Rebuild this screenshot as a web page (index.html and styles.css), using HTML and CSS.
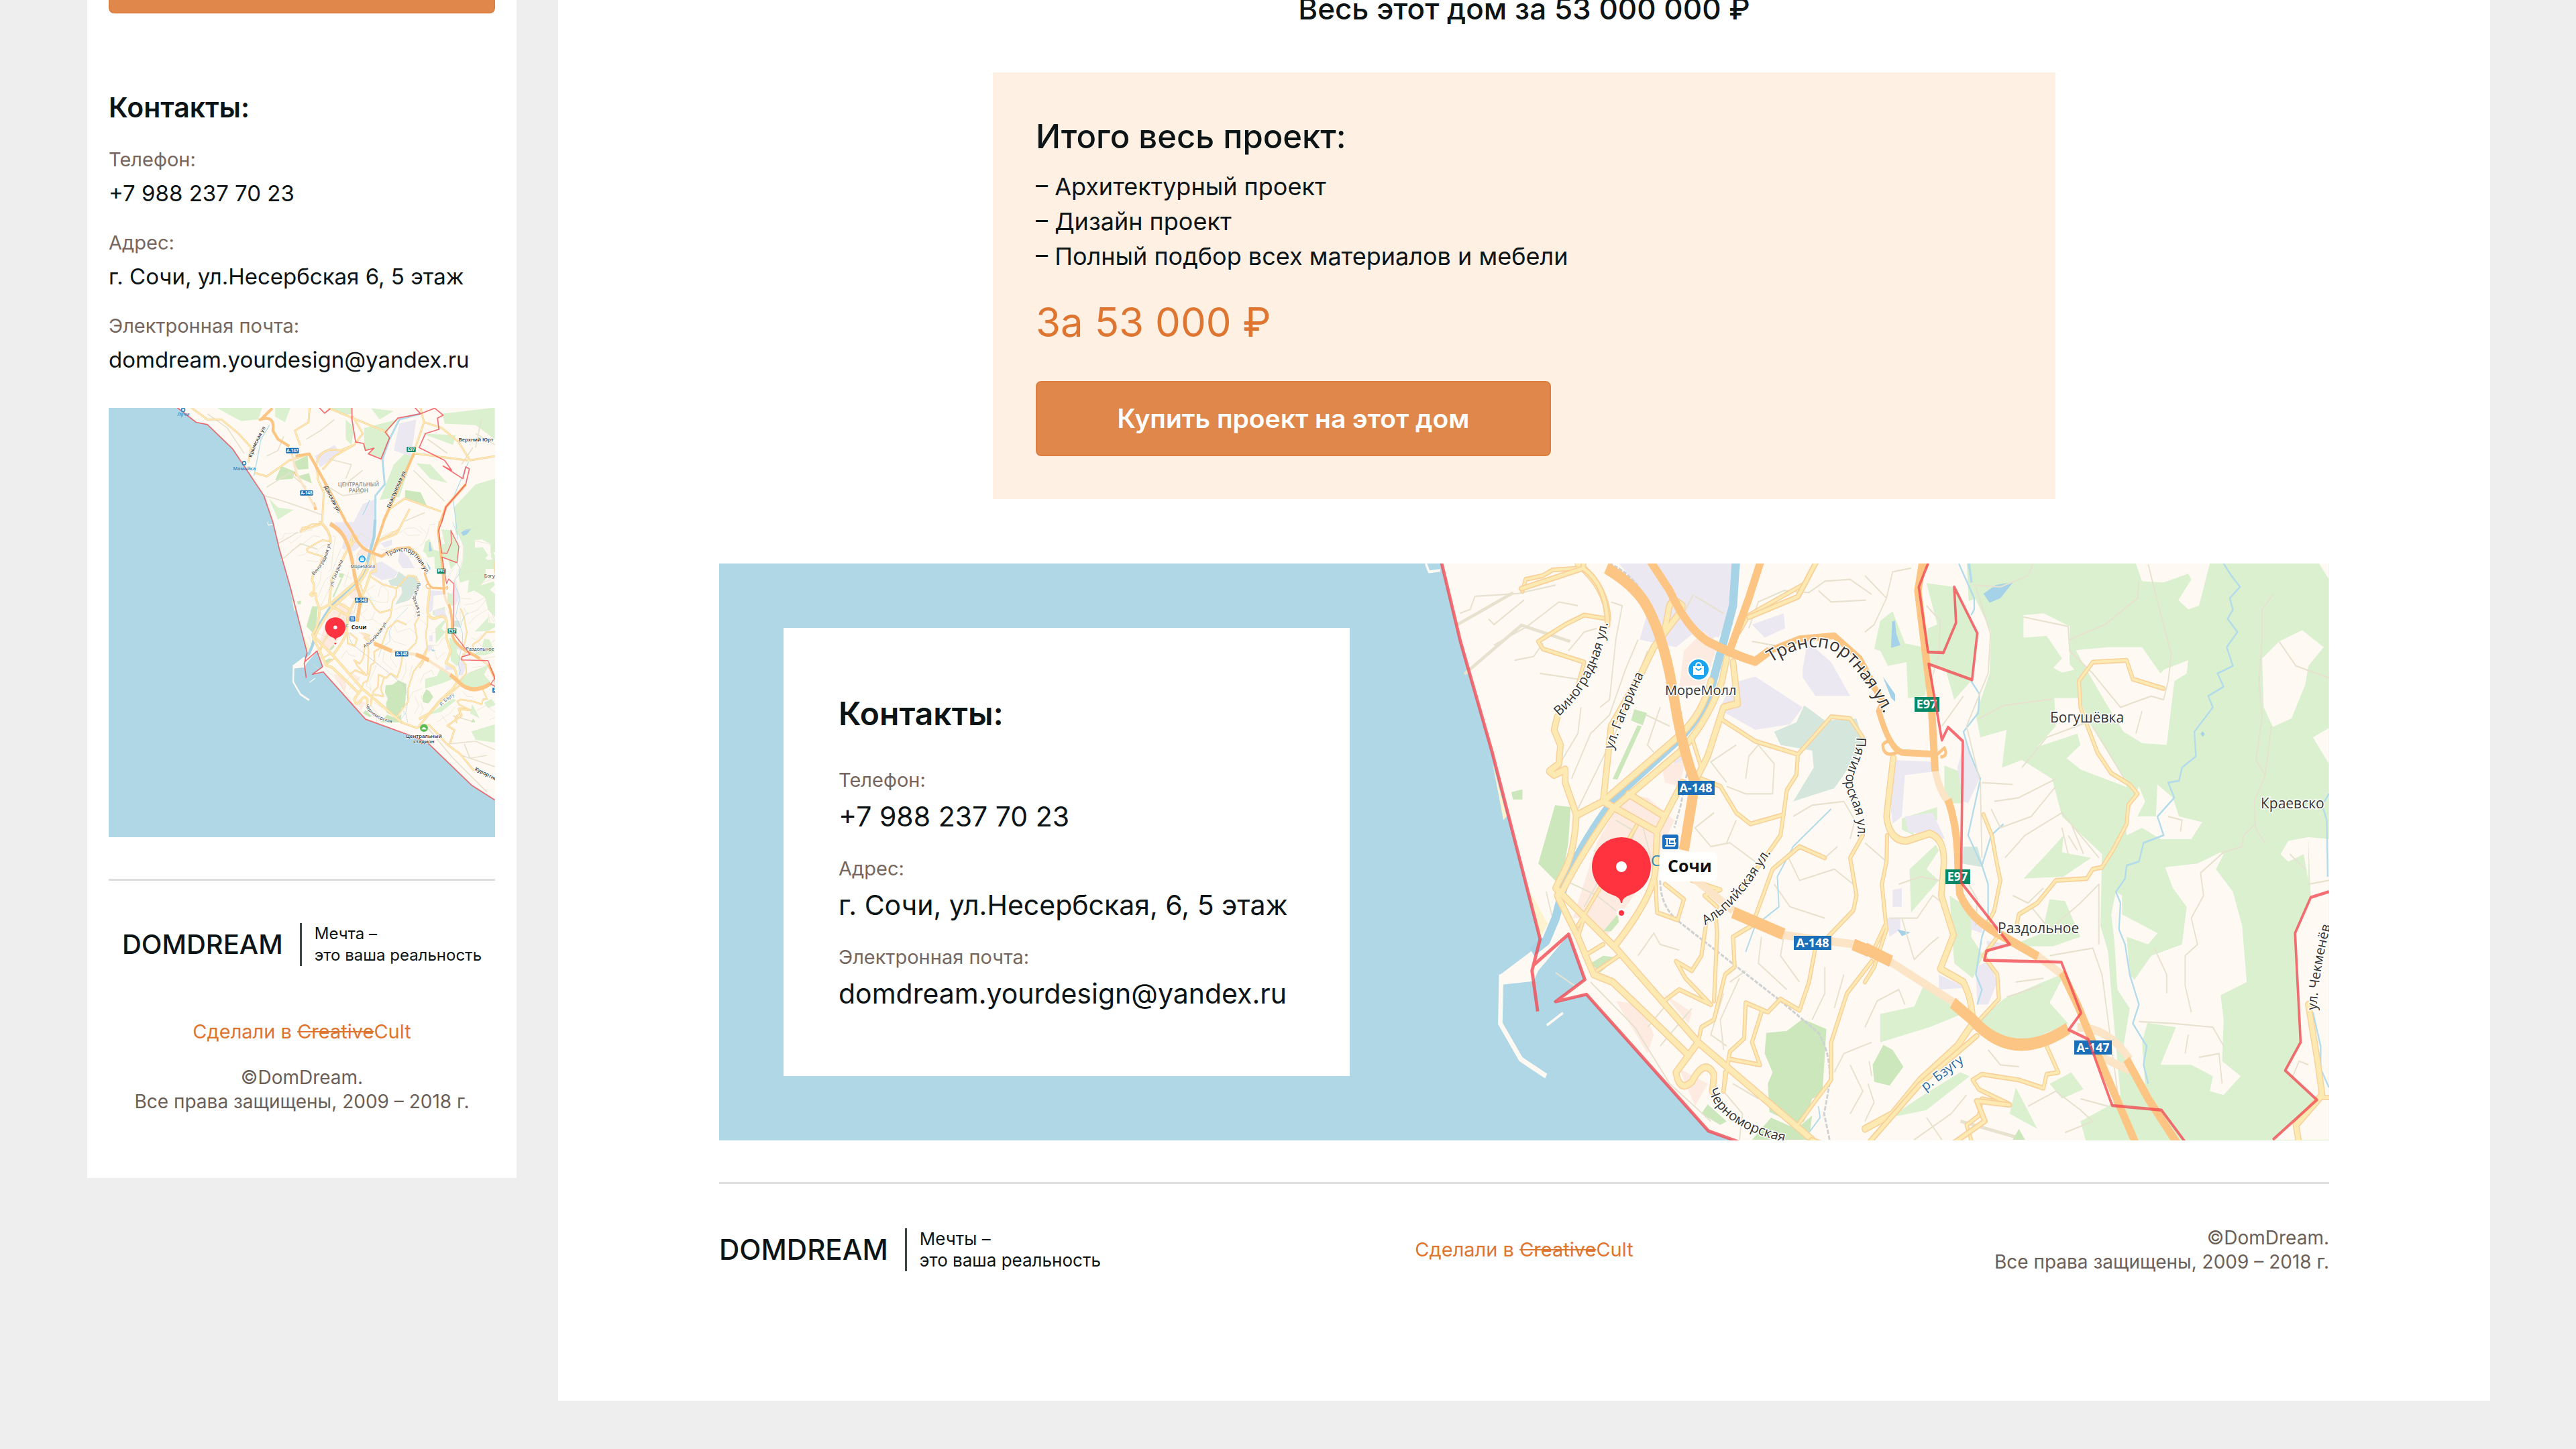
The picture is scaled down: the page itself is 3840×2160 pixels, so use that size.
FILE: index.html
```html
<!DOCTYPE html>
<html lang="ru">
<head>
<meta charset="utf-8">
<meta name="viewport" content="width=device-width, initial-scale=1">
<title>DomDream</title>
<link rel="stylesheet" href="styles.css">
</head>
<body>
<div class="board">

  <section class="phone">
    <button class="btn btn-tail" type="button" aria-label="Купить"></button>
    <h2 class="phone-title">Контакты:</h2>
    <dl class="contacts contacts-small">
      <div class="contact"><dt>Телефон:</dt><dd><a href="tel:+79882377023">+7 988 237 70 23</a></dd></div>
      <div class="contact"><dt>Адрес:</dt><dd>г. Сочи, ул.Несербская 6, 5 этаж</dd></div>
      <div class="contact"><dt>Электронная почта:</dt><dd><a href="mailto:domdream.yourdesign@yandex.ru">domdream.yourdesign@yandex.ru</a></dd></div>
    </dl>
    <svg class="phone-map" viewBox="1444 349 1659 1843" preserveAspectRatio="xMidYMid slice" role="img">
      <use href="#sochi"/>
      <g transform="translate(1322.6 326) scale(1.212)">
        <defs>
          <path id="n-don" d="M864,298 Q893,360 928,416"/>
          <path id="n-pla" d="M1098,375 Q1118,310 1170,215"/>
          <path id="n-kry" d="M608,195 Q615,160 656,90"/>
          <path id="n-kur" d="M1396,1302 L1500,1354"/>
        </defs>
        <g class="n-district"><text x="985" y="297">ЦЕНТРАЛЬНЫЙ</text><text x="985" y="318">РАЙОН</text></g>
        <g class="n-place">
          <text x="1340" y="137">Верхний Юрт</text>
          <text class="n-mid" x="1217" y="1189">Центральный</text>
          <text class="n-mid" x="1217" y="1207">стадион</text>
        </g>
        <g class="n-place">
          <text><textPath href="#n-don">Донская ул.</textPath></text>
          <text><textPath href="#n-pla">Пластунская ул.</textPath></text>
          <text><textPath href="#n-kry">Крымская ул.</textPath></text>
          <text><textPath href="#n-kur">Курортный</textPath></text>
        </g>
        <g class="n-water"><text x="343" y="47">Лучи</text><text x="541" y="239">Мамайка</text></g>
        <circle class="stop" cx="364" cy="26" r="6"/><circle class="stop" cx="580" cy="215" r="6"/>
        <g class="badge badge-blue"><rect x="728" y="161" width="46" height="19" rx="3"/><text x="751" y="176">A-147</text></g>
        <g class="badge badge-blue"><rect x="778" y="311" width="46" height="19" rx="3"/><text x="801" y="326">A-148</text></g>
        <g class="badge badge-green"><rect x="1156" y="157" width="32" height="19" rx="3"/><text x="1172" y="172">E97</text></g>
        <circle cx="1217" cy="1153" r="14" fill="#5dbb55"/><path d="M1208,1158 Q1217,1142 1226,1158z" fill="#fff"/>
      </g>
    </svg>
    <footer class="phone-footer">
      <a class="logo" href="#"><span class="logo-name">DOMDREAM</span><span class="logo-tag">Мечта –<br>это ваша реальность</span></a>
      <a class="credit" href="#">Сделали в <s>Creative</s>Cult</a>
      <p class="copyright">©DomDream.<br>Все права защищены, 2009 – 2018 г.</p>
    </footer>
  </section>

  <main class="desktop">
    <h1 class="house-price">Весь этот дом за 53 000 000 ₽</h1>

    <section class="offer">
      <h2 class="offer-title">Итого весь проект:</h2>
      <ul class="offer-list">
        <li>– Архитектурный проект</li>
        <li>– Дизайн проект</li>
        <li>– Полный подбор всех материалов и мебели</li>
      </ul>
      <p class="offer-price">За 53 000 ₽</p>
      <button class="btn" type="button">Купить проект на этот дом</button>
    </section>

    <section class="location">
      <svg class="location-map" viewBox="1072 840 2400 860" preserveAspectRatio="xMidYMid slice" role="img">
        <defs>
          <!-- west, east and north sheets of the road network -->
          <g id="main-w">
            <path d="M640,18 Q730,80 735,165 M635,685 Q630,780 600,830 L570,880 L760,1040 L1020,1290 L1380,1549"/>
            <path d="M1110,270 L1095,330 Q1050,440 960,520 L750,670 Q650,790 590,890"/>
            <path d="M1060,330 Q1030,430 940,490 L720,650 L640,685"/>
            <path d="M970,140 L880,240 L840,310 L745,450 L720,650"/>
            <path d="M970,130 Q930,100 925,150 L915,190 M1130,280 L1145,390 L1100,400 L1050,530 L1020,580"/>
            <path d="M575,900 L640,1010 L690,1110 L750,1130 L850,1210 L990,1325"/>
            <path d="M720,650 L890,730 M800,630 L915,690 M970,600 L890,730 L885,830 Q880,900 760,1030"/>
            <path d="M1020,1290 L950,1370 Q960,1425 1000,1395 Q1040,1330 1070,1375 L1065,1420"/>
            <path d="M575,425 L565,460 L585,500 L580,550 L550,570 L565,580 L600,565 L600,600 L635,685"/>
          </g>
          <g id="minor-w">
            <path d="M650,30 L560,35 L530,50 L475,60 L465,92 M735,165 L660,155 L600,180 L515,225 L530,245 L660,280 L640,340 M640,980 L825,715 M640,1010 L660,960 M660,1060 L720,1030 M700,1100 L770,1060"/>
            <path d="M1090,430 L1200,490 L1335,525 L1440,425 L1500,430 L1540,480 M1335,525 L1330,580 L1300,620 L1280,740 L1230,800 L1150,890 M1030,590 L1090,610 L1140,680 L1185,710 L1290,685 M1000,480 L1030,560"/>
            <path d="M915,870 L975,910 L955,965 L890,945 L885,860 M1045,975 L1030,1060 L1000,1100 L950,1075 L980,1120 L1060,1190 L960,1150 L905,1185 M1075,950 L1080,1000 L1070,1180 M1000,860 L1090,885 L1040,900 L1080,930"/>
            <path d="M1420,800 L1340,770 L1255,830 L1190,980 L1130,1010 L1135,1090 L1105,1110 L1070,1230 L1030,1250 L1020,1290 M1390,1040 L1370,1130 L1340,1205 L1280,1175 L1240,1210 L1170,1185 L1165,1280 L1120,1315 L1100,1420 M1220,1210 L1190,1290 L1215,1350 L1120,1335"/>
            <path d="M1540,740 L1500,800 L1520,900 L1510,940 L1430,1010 M1568,1075 L1490,1160 L1440,1290 L1440,1390 L1395,1440 L1330,1515"/>
            <path d="M1390,18 L1360,70 L1180,155 L1150,200 M1100,1420 L1105,1370"/>
          </g>
          <g id="main-e">
            <path d="M92,535 L70,690 Q80,755 135,755 L210,735 Q265,750 255,830 L248,900 L288,1005 L245,1095 L320,1130 Q350,1180 350,1240 L300,1300 L180,1390 L90,1480 L0,1520"/>
            <path d="M1440,1190 L1470,1340 L1485,1430 L1400,1510 L1410,1560"/>
          </g>
          <g id="minor-e">
            <path d="M72,740 L70,810 L55,870 L70,990 L30,1090 L0,1130 M65,980 L20,1060"/>
            <path d="M385,685 L412,740 L425,800 L440,860 L420,940 L395,980 L430,1010 L385,1060 L430,1110 L435,1175 L350,1250"/>
            <path d="M490,990 L500,950 L560,920 L620,860 L720,855 L740,830 L770,825 L805,780 L850,710 L855,660 L885,630 L860,605 L800,575 L755,520 L700,400 L695,330 L740,280 L850,275 L870,325 L970,350"/>
            <path d="M590,1300 L628,1370 L590,1375 L580,1412 L500,1390 L380,1375 L350,1390 L370,1415 L470,1455 L380,1440 L370,1485 L330,1510 L345,1549 M1480,1437 L1507,1437"/>
          </g>
          <g id="main-n">
            <path d="M395,20 L450,60 L500,60 L560,110 L605,160 L595,210 M620,250 L660,262 L740,205 L812,182 M812,182 Q845,240 840,270 L862,320 L856,430 L780,455 M856,430 Q885,450 886,500"/>
            <path d="M835,220 Q850,155 920,170 L970,150 L1000,110 L965,50 M880,20 L1000,70 L1085,105 M860,235 L900,190 L970,150 M1205,20 L1217,70 L1180,180 M1217,70 L1280,90 L1340,140 L1380,205 L1470,190 M1180,180 L1370,205 M1060,490 L1120,465 L1165,380 M1090,380 L1150,340 L1275,385 M760,100 L808,70 L812,20 M760,100 L778,150"/>
            <path d="M1137,1133 L1190,1152 L1235,1142 L1300,1212 L1345,1245 L1392,1302 M1200,1145 L1270,1065 L1340,1005 M1310,1205 L1325,1160 L1300,1145 L1350,1110 L1340,1085 L1380,1090"/>
          </g>
        </defs>

        <g id="sochi">
          <rect x="1000" y="300" width="2500" height="1950" fill="#b0d7e5"/>

          <g transform="translate(1322.6 326) scale(1.212)">
            <path fill="#fefaf3" d="M320,0 L343,18 L410,70 L450,78 L540,165 L590,240 L650,330 L682,424 L705,520 L744,656 L803,886 L795,918 L838,880 L858,936 L822,963 L860,954 L1010,1122 L1165,1178 L1230,1205 L1385,1355 L1468,1408 L1800,1600 L1800,0z"/>
            <g fill="#daf0cf">
              <path d="M480,16 L645,16 L630,60 L570,66 L520,40z M690,16 L745,16 L725,70 L690,50z M868,16 L960,16 L962,40 L930,45z M1125,60 L1085,105 L1100,125 L1065,200 L1020,180 L1040,165 L1005,170 L1005,90z M1150,180 L1180,185 L1130,335 L1060,345 L1110,220z"/>
              <path d="M1283,40 L1468,18 L1468,130 L1400,80 L1290,75z M1190,215 L1240,220 L1300,285 L1240,270z M1330,470 L1325,370 L1400,290 L1468,270 L1500,424z M668,340 L700,372 L755,380 L700,415z M1210,110 L1330,115 L1320,150z M940,60 L970,90 L960,150 L940,130z M1030,20 L1110,30 L1060,60z M1385,1165 L1468,1140 L1468,1205 L1400,1195z"/>
            </g>
            <path fill="#cbe7bb" d="M755,210 L805,188 L808,235 L770,238z M690,275 L712,225 L760,245 L752,270z M765,262 L810,250 L820,287z M1150,310 L1205,318 L1230,372 L1150,340z"/>
            <path fill="#ebe8f2" d="M1130,75 L1190,60 L1180,130 L1170,190 L1110,170z M1050,340 L1040,500 L1010,520 L960,440 L1000,360z M830,190 L900,150 L920,180 L850,230z"/>
            <g class="water"><path d="M1210,38 L1130,60 L1095,130 L1070,200 L1078,290 L1045,330 L1045,430" stroke-width="7"/><path d="M670,80 L640,130 L615,260 M1375,210 L1320,340 L1335,460 M1000,400 L1025,345" stroke-width="3"/></g>
            <g class="lane"><path d="M450,40 L520,90 L580,180 M660,300 L740,250 L800,300 M650,330 Q730,350 860,400 M700,500 L770,460 M710,560 L780,500 L840,520 M880,300 L930,330 L1000,320 M880,200 L960,220 L940,270 M1000,240 L950,280 M1230,130 L1300,180 M1180,240 L1290,350 M1150,420 L1220,390 M1400,110 L1468,150 M1420,60 L1400,160 M1390,160 L1350,220 M720,120 L700,170 L660,190 M900,60 L850,100 L800,130"/><path d="M1220,1140 L1320,1260 L1440,1380 M1300,1210 L1400,1200 L1468,1230 M1350,1250 L1468,1290 M1320,1110 L1390,1130 M1360,1210 L1380,1260 L1440,1250"/></g>
          </g>

          <!-- built-up, park and forest areas -->
          <g transform="translate(2050 830) scale(.472 .561)">
            <path fill="#ebe8f2" d="M770,18 L1150,18 L1120,150 L1085,215 L1010,200 L950,240 L835,220 L870,120z M1130,335 L1200,318 L1350,400 L1310,445 L1200,460 L1085,405z M1190,180 L1290,150 L1295,190 L1230,215z M1350,300 L1365,225 L1440,280 L1500,370 L1390,370 L1350,320z M940,545 L975,520 L970,580z"/>
            <path fill="#fdebe2" d="M625,960 L700,760 L790,630 L860,640 L945,700 L870,830 L730,1010 L650,960z M975,250 L1040,195 L1080,240 L1040,340 L960,345z M760,1180 L840,1190 L880,1270 L860,1320z M910,1160 L1000,1210 L990,1240z M960,1360 L1050,1400 L1010,1460z M905,560 L980,540 L960,610 L915,600z"/>
            <path fill="#d5e6dd" d="M1260,465 L1330,440 L1355,395 L1420,435 L1520,430 L1545,500 L1450,615 L1320,650 L1385,560 L1380,515 L1280,500z"/>
            <path fill="#cbe7bb" d="M568,660 L617,665 L610,760 L595,830 L570,862 L515,815z M818,405 L858,415 L845,448 L808,435z M828,448 L842,450 L765,592 L750,590z M1235,1265 L1300,1260 L1350,1228 L1425,1255 L1412,1430 L1380,1440 L1355,1500 L1330,1510 L1245,1475 L1240,1400 L1255,1370 L1230,1320z M1190,1549 L1250,1490 L1330,1520 L1380,1485 L1370,1549z M720,995 L765,950 L770,970 L745,995z M680,1080 L720,1060 L765,1065 L710,1105z M1030,1480 L1050,1455 L1110,1500 L1090,1510z M430,625 L465,618 L465,645 L435,645z"/>
            <path fill="#fdf3cf" d="M490,890 L545,975 L522,1010z M370,545 L415,690 L405,700z"/>
            <g fill="#fefaf3"><path d="M522,1030 L395,1110 L400,1137 L500,1128 L515,1100 L610,1005z"/></g>
            <g class="pier"><path d="M398,1110 L395,1240 L460,1335 L540,1380"/><path class="pier-thin" d="M542,1245 L593,1212 M160,18 L170,40 L205,36"/></g>
          </g>
          <g transform="translate(2780 830) scale(.459 .561)">
            <path fill="#daf0cf" d="M335,70 L420,60 L470,18 L1507,18 L1507,1560 L720,1560 L700,1500 L790,1460 L830,1430 L800,1160 L790,1050 L765,980 L770,790 L640,690 L608,590 L510,540 L445,560 L460,460 L375,480 L360,420 L405,310 L410,200z"/>
            <path fill="#daf0cf" d="M200,70 L290,80 L365,203 L348,327 L290,380 L262,300 L210,285 L195,370 L140,375 L135,280 L75,290 L50,250 L30,245 L50,170 L90,145 L130,230 L190,240 L205,190 L235,180z M258,555 L322,575 L318,655 L258,655z M120,695 L235,665 L235,700 L150,700 L160,740 L120,725z M145,830 L230,765 L240,780 L200,830 L240,860 L150,945z M275,900 L350,940 L345,1010 L385,1060 L350,1120 L290,1080z M375,1230 L450,1175 L650,1105 L600,1185 L660,1240 L520,1290 L400,1270z M50,1215 L160,1195 L190,1140 L270,1170 L330,1210 L210,1250 L50,1290z M515,855 L590,790 L645,740 L640,785 L735,800 L645,850z M470,1035 L575,1000 L600,910 L650,915 L700,1010 L610,1035z M820,1160 L860,1180 L880,1250 L840,1330 L815,1240z M600,1400 L670,1370 L710,1415 L640,1440z M80,1490 L190,1430 L310,1370 L340,1380 L200,1470z M490,1410 L560,1520 L470,1480z"/>
            <path fill="#cbe7bb" d="M25,1350 L60,1297 L90,1310 L125,1355 L80,1405 L30,1395z M480,1549 L500,1520 L520,1549z"/>
            <path fill="#ebe8f2" d="M100,540 L225,545 L230,570 L130,580 L120,690 L90,710 L80,640z M130,690 L220,680 L260,750 L140,730z M300,560 L325,490 L372,590 L335,655 L320,650z M90,885 L120,880 L120,930 L90,930z M70,960 L115,960 L115,990 L80,1010z M345,945 L385,960 L380,1000 L345,990z M360,1090 L400,1075 L430,1130 L400,1190 L365,1190z M240,1110 L330,1145 L240,1150z M395,1020 L470,1030 L400,1050z"/>
            <path fill="#d5e6dd" d="M320,770 L365,770 L385,825 L315,815z M1000,1225 L1040,1215 L1030,1245z"/>
            <g fill="#fefaf3">
              <path d="M880,18 L1120,18 L1085,130 L1050,140 L1018,115 L1060,60 L1050,45 L970,68 L900,65z M515,155 L580,150 L665,185 L665,285 L680,300 L640,308 L612,295 L640,270 L590,210 L515,215z M685,248 L790,240 L900,240 L960,310 L970,300 L1050,275 L1045,310 L1005,330 L980,500 L900,495 L840,465 L780,385 L720,300z"/>
              <path d="M615,375 L695,375 L735,450 L850,600 L850,612 L700,565 L655,535 L700,500 L690,470 L560,505 L620,450z M1345,225 L1420,195 L1490,240 L1440,290 L1430,340 L1385,430 L1325,452 L1295,400 L1290,270z M950,605 L1000,640 L1020,690 L1095,705 L1060,750 L960,750 L900,720 L850,740 L845,700 L890,610 L910,650 L885,690 L945,690z"/>
              <path d="M975,825 L1080,815 L1155,785 L1165,790 L1140,830 L1195,890 L1225,980 L1240,1130 L1155,1165 L1165,1230 L1160,1340 L1220,1380 L1165,1430 L1120,1420 L1130,1380 L1060,1350 L960,1350 L1010,1250 L890,1235 L870,1130 L930,1060 L1030,1030 L1045,930 L1000,880z"/>
              <path d="M815,890 L835,900 L835,950 L950,1000 L920,1030 L850,1010 L860,1110 L925,1170 L920,1230 L900,1290 L910,1400 L870,1385 L840,1300 L860,1200 L820,1150 L810,1020 L800,950z M1350,790 L1375,755 L1440,745 L1440,860 L1425,790 L1375,810z M1507,750 L1507,1549 L1325,1549 L1468,1443 L1367,1365 L1415,1290 L1397,1000 L1448,905 L1440,745z M1455,480 L1507,455 L1507,550z M1475,18 L1507,18 L1507,60z"/>
            </g>
            <path fill="#a5d2e8" d="M385,98 L425,75 L482,67 L440,110 L405,122z M88,172 L98,170 L102,205 L115,235 L85,242z M58,318 L98,365 L98,385 L85,375z M105,990 L148,998 L120,1008z M1090,470 L1097,464 L1104,471 L1097,478z"/>
            <g class="water" stroke-width="5">
              <path d="M305,18 L355,110 L355,140 L345,155 M345,330 L372,365 L368,415 L320,465 L340,520 L375,590 L335,740 L380,820 L400,870 L400,960 L380,1010 L360,1110 L380,1150 L365,1190 M380,820 L410,740 L450,710 M1165,18 L1190,50 L1218,80 L1185,110 L1195,140 L1178,165 L1210,200 L1175,240 L1195,290 L1145,310 L1165,345 L1115,370 L1130,400 L1070,465 L1075,530 L1030,560 L1020,595 L985,600 L1005,640 L950,690 L970,740 L905,760 L890,810 L850,820 L845,855 L815,890 L830,920 L825,990 L845,1030 L860,1110 L890,1190 L870,1240 L915,1300 L905,1350 L920,1400 M1507,630 L1485,660 L1500,700 L1503,850 M1455,1210 L1480,1300 L1480,1360 L1507,1410"/>
            </g>
          </g>

          <!-- lanes, railway and river -->
          <g transform="translate(2050 830) scale(.472 .561)">
            <g class="lane">
              <path d="M268,150 L300,140 L315,105 L450,98 L570,75 M358,165 L375,180 L470,115 M375,235 L480,185 L580,120 L640,130 M440,275 L500,265 L530,230 M520,310 L640,325 M610,250 L660,200 L700,190 M745,120 L780,130 L760,220 L740,380 L710,400 M830,220 L790,300 L740,420 L680,470 L620,590 M860,250 L780,430 L640,670 M650,400 L640,470 L590,540"/>
              <path d="M855,420 L930,450 M900,400 L860,500 L880,520 M1005,100 L980,140 M1010,105 L1100,150 M1180,190 L1210,120 L1290,90 L1370,95 L1420,65 L1500,60 L1568,100 M1190,225 L1290,240 M1400,90 L1440,120 L1550,115 M1170,590 L1180,530 L1210,500 L1260,550 L1255,630 L1170,630 L1110,610 M1140,500 L1060,545 L1110,600 M1070,680 L1010,720 L1060,770 L1120,760 L1200,810 M1140,700 L1110,760"/>
              <path d="M1320,690 L1380,660 L1480,650 L1515,700 L1500,750 M1300,790 L1340,860 L1450,830 L1510,870 M1260,870 L1310,930 L1420,960 M1460,770 L1420,800 M540,890 L560,960 M600,860 L700,900 L760,940 M690,780 L790,830 M660,930 L760,780 M760,700 L820,730 L770,860 M840,700 L880,830 M830,1060 L880,1000 L900,1030 L960,1045 M790,1070 L850,1130 L900,1170 M680,1130 L820,1250 L930,1400 L1060,1500"/>
              <path d="M900,1300 L1000,1200 M860,1250 L920,1190 M1100,1160 L1060,1270 L1110,1300 M1150,1120 L1090,1230 L1100,1310 M1100,1420 L1160,1480 L1150,1549 M1130,1400 L1210,1440 M1170,1100 L1120,1130 M1220,1010 L1210,1080 L1300,1150 M1290,1010 L1280,1060 L1340,1130 M1420,1090 L1420,1160 L1380,1230 M1450,1370 L1480,1320 L1568,1290 M1500,1350 L1540,1420 L1500,1480 M1560,1340 L1568,1380 M570,1105 L630,1140 M1480,1110 L1450,1200"/>
            </g>
            <path class="rail" d="M740,18 Q850,60 875,170 L960,430 L995,530 L965,660 L945,720 M900,860 Q900,930 960,970 L1280,1180 L1400,1265 Q1440,1320 1435,1400 L1418,1480 L1435,1549"/>
            <path class="river" d="M1140,0 L1130,130 L1070,320 Q1040,420 950,490 L780,620 Q680,720 600,860 L570,960 L540,1020 L495,1050"/>
            <g class="water" stroke-width="4"><path d="M1440,670 L1320,770 L1270,850 L1275,930 L1200,980 L1170,1050 M1400,1460 L1405,1490 L1370,1530"/></g>
          </g>
          <g transform="translate(2780 830) scale(.459 .561)">
            <g class="lane">
              <path d="M0,50 L70,110 L30,180 L0,200 M70,110 L90,40 L150,30 M200,130 L245,170 L240,260 L215,330 M320,370 L250,450 M350,75 L440,80 L530,50 L545,20 M360,80 L408,205 L400,310 L330,450 L375,600 L380,800 M890,65 L885,110 L780,180 L665,220 M515,160 L660,185 L665,250 L740,310 L830,400 L930,370 L970,380 L985,330 L995,260 L960,150 L920,20 M370,430 L450,395 L610,378 M720,440 L590,480 L510,560 M740,450 L850,600 M880,470 L900,410"/>
              <path d="M380,600 L480,605 M420,650 L500,640 L620,590 M410,670 L440,720 L540,690 L620,610 M455,800 L520,740 L640,680 L760,800 M640,720 L660,790 M670,710 L710,790 M660,740 L690,780 M480,900 L530,920 L580,880 M540,930 L600,990 L700,920 L760,870 L760,1030 M1325,100 L1290,140 L1290,220 L1280,330 L1290,430 L1270,540 L1300,580 L1265,650 L1268,720 L1300,762 M1320,450 L1300,580 M1268,710 L1230,740 L1225,770 L1165,785 L1090,840 L1100,900 L1060,960 L1080,1030 L1040,1060 L1040,1140 L1060,1210 M1345,225 L1400,290 L1507,322 M985,690 L1030,700 L1025,730"/>
              <path d="M600,1060 L740,1040 L770,1110 L830,1480 M490,1130 L580,1120 M460,1170 L570,1140 M890,1235 L1000,1240 L1130,1250 L1165,1300 M1050,1270 L1040,1320 M1085,1330 L1150,1320 L1160,1400 M940,1040 L980,1110 L980,1160 M0,760 L70,810 M80,960 L170,960 L220,900 L270,930 M120,960 L160,1070 L210,1030 L240,1010 M110,870 L180,850 L240,860 M330,860 L365,910 L360,980 M0,1250 L40,1180 L110,1150 L130,1190 M10,1400 L30,1450 L0,1500 M160,1549 L280,1480 L330,1430 M200,1490 L250,1549 M400,1310 L440,1350 L500,1355 M530,1460 L620,1420 L700,1470 L740,1500 L650,1530 M700,1440 L790,1460 M1380,790 L1430,830 M1440,870 L1507,860 M1380,1400 L1410,1340 L1440,1350"/>
            </g>
          </g>

          <!-- roads: casing pass, then fill pass -->
          <g transform="translate(2050 830) scale(.472 .561)"><use href="#minor-w" class="case case-s"/><use href="#main-w" class="case"/><use href="#minor-w" class="fill fill-s"/><use href="#main-w" class="fill"/></g>
          <g transform="translate(2780 830) scale(.459 .561)"><use href="#minor-e" class="case case-s"/><use href="#main-e" class="case"/><use href="#minor-e" class="fill fill-s"/><use href="#main-e" class="fill"/></g>
          <g transform="translate(1322.6 326) scale(1.212)"><use href="#main-n" class="case case-n"/><use href="#main-n" class="fill fill-n"/></g>

          <g transform="translate(1322.6 326) scale(1.212)" class="highway highway-n">
            <path d="M632,62 Q690,40 682,100 L700,130 L740,155 M640,60 L680,20 M762,190 L810,182 Q860,270 938,418 M1182,180 L1075,418 M1274,430 L1295,370 L1365,290 M825,355 L834,380 M760,245 L768,260 M885,430 L900,438"/>
            <path class="tunnel" d="M745,165 L765,250 L830,370"/>
          </g>
          <g transform="translate(2050 830) scale(.472 .561)" class="highway">
            <path class="tunnel" d="M1000,850 L1130,940 M1290,1005 L1515,1030"/>
            <path class="mid" d="M860,0 L930,90 Q985,190 1050,225 Q1130,260 1200,278 L1245,250 M1222,0 L1180,110 L1115,260"/>
            <path class="thin" d="M1245,250 L1340,218 L1450,210 L1530,270 L1568,330"/>
            <path d="M730,30 Q810,70 850,120 Q900,190 930,310 L955,430 Q975,520 1010,600 L975,780 M1130,945 L1290,1003 M1510,1030 L1560,1048"/>
          </g>
          <g transform="translate(2780 830) scale(.459 .561)" class="highway">
            <path class="tunnel" d="M80,1075 L290,1185 M228,565 Q240,620 270,650 M560,1060 L640,1110 M690,1250 Q790,1250 860,1335 M770,1330 L860,1365"/>
            <path class="thin" d="M0,310 L60,385 L45,410 Q80,510 120,520 L235,525"/>
            <path class="loop" d="M105,520 Q60,535 58,500 Q80,475 105,515 M235,525 L258,508 Q272,530 245,532"/>
            <path class="mid" d="M188,10 L172,90 L215,380 L228,570 M270,645 Q302,720 302,820 L308,895 Q340,960 430,1000 L562,1062 M640,1105 L690,1190 L760,1330 L880,1560 M850,1335 L920,1440 L1015,1560"/>
            <path d="M0,1040 L85,1075 M285,1185 L350,1230 Q480,1350 660,1253"/>
          </g>

          <g class="badge badge-big badge-blue">
            <rect x="2501" y="1164" width="55" height="21"/><text x="2528" y="1181">A-148</text>
            <rect x="2674" y="1395" width="56" height="21"/><text x="2702" y="1412">A-148</text>
            <rect x="3092" y="1551" width="56" height="21"/><text x="3120" y="1568">A-147</text>
          </g>
          <g class="badge badge-big badge-green">
            <rect x="2854" y="1039" width="37" height="22"/><text x="2872" y="1056">E97</text>
            <rect x="2900" y="1296" width="37" height="22"/><text x="2918" y="1313">E97</text>
          </g>

          <!-- city boundary -->
          <g transform="translate(1322.6 326) scale(1.212)">
            <path class="border border-n" d="M343,18 L410,70 L450,78 L540,165 L590,240 L650,330 L682,424 L705,520 L744,656 L803,886 L793,925 L800,975 M795,918 L838,880 L858,936 L822,963 L860,954 L1010,1122 L1165,1178 L1230,1205 L1385,1355 L1468,1408"/>
            <path class="border border-n" d="M846,18 L865,38 L885,22 M962,18 L962,60 L975,140 L1003,145 L1010,170 L1040,162 L1020,182 L1065,200 L1095,125 L1080,105 L1125,55 L1205,40 L1185,18 M1205,40 L1255,20 L1285,45 L1265,55 L1270,95 L1222,110 L1200,160 L1290,205 L1315,240 L1285,225 L1355,270 L1365,228 L1378,235 L1365,290 L1295,370 L1280,424"/>
          </g>
          <g transform="translate(2780 830) scale(.459 .561)">
            <path class="border" d="M205,18 L175,80 L205,253 L255,255 L296,175 L290,80 L365,203 L348,327 L207,285 L250,487 L270,453 L318,490 L312,865 L470,1030 L395,1047 L388,1072 L638,1077 L702,1212 L662,1257 L725,1282 L803,1458 L963,1470 L1040,1555 M1507,890 L1448,905 L1397,1000 L1415,1290 L1365,1365 L1468,1443 L1325,1549"/>
          </g>

          <defs>
            <path id="t-vin" d="M2324,1068 Q2390,1010 2401,900"/>
            <path id="t-gag" d="M2404,1118 Q2428,1050 2465,975"/>
            <path id="t-tra" d="M2640,988 Q2712,942 2757,988 Q2782,1015 2815,1075"/>
            <path id="t-pya" d="M2767,1099 C2770,1130 2744,1150 2753,1178 C2760,1200 2776,1215 2766,1270"/>
            <path id="t-alp" d="M2542,1379 C2580,1360 2610,1320 2650,1254"/>
            <path id="t-bzu" d="M2870,1627 L2950,1566"/>
            <path id="t-che" d="M2547,1625 Q2567,1690 2700,1710"/>
            <path id="t-chk" d="M3453,1506 Q3458,1430 3485,1340"/>
          </defs>
          <g class="label">
            <text x="3056" y="1077">Богушёвка</text>
            <text x="3370" y="1205">Краевско</text>
            <text x="2978" y="1391">Раздольное</text>
            <text class="label-mall" x="2482" y="1036">МореМолл</text>
          </g>
          <g class="label label-street">
            <text><textPath href="#t-vin">Виноградная ул.</textPath></text>
            <text><textPath href="#t-gag">ул. Гагарина</textPath></text>
            <text class="label-wide"><textPath href="#t-tra">Транспортная ул.</textPath></text>
            <text><textPath href="#t-pya">Пятигорская ул.</textPath></text>
            <text><textPath href="#t-alp">Альпийская ул.</textPath></text>
            <text><textPath href="#t-che">Черноморская</textPath></text>
            <text><textPath href="#t-chk">ул. Чекменёв</textPath></text>
            <text class="label-river"><textPath href="#t-bzu">р. Бзугу</textPath></text>
          </g>

          <circle cx="2532" cy="998" r="17" fill="#fff"/><circle cx="2532" cy="998" r="15" fill="#1aa3f0"/>
          <path fill="#fff" d="M2524,993 h16 v13 h-16z"/><path fill="none" stroke="#fff" stroke-width="2" d="M2528,993 q0,-5 4,-5 q4,0 4,5"/><path fill="none" stroke="#1aa3f0" stroke-width="2" d="M2528,996 q4,6 8,0"/>
          <rect x="2478" y="1244" width="24" height="22" rx="3" fill="#1a6fc0"/>
          <path fill="none" stroke="#fff" stroke-width="2" d="M2482,1250 h16 M2485,1250 v10 M2489,1252 h7 v5 h-7z M2482,1261 h14 l2,-5"/>
          <text class="station" x="2461" y="1291">С</text>
          <rect x="2474" y="1270" width="86" height="44" rx="8" fill="#fff" fill-opacity=".92"/>
          <text class="city" x="2486" y="1300">Сочи</text>
          <path fill="#ff3340" d="M2417,1248 a44,44 0 0 1 14,85.700 q-13,4 -13,12.300 h-2 q0,-8.300 -13,-12.300 a44,44 0 0 1 14,-85.700z"/>
          <circle cx="2417" cy="1292" r="8" fill="#fff"/>
          <circle cx="2417" cy="1361" r="7" fill="#fff"/><circle cx="2417" cy="1361" r="4" fill="#ff3340"/>
        </g>
      </svg>
      <div class="location-card">
        <h2 class="location-title">Контакты:</h2>
        <dl class="contacts">
          <div class="contact"><dt>Телефон:</dt><dd><a href="tel:+79882377023">+7 988 237 70 23</a></dd></div>
          <div class="contact"><dt>Адрес:</dt><dd>г. Сочи, ул.Несербская, 6, 5 этаж</dd></div>
          <div class="contact"><dt>Электронная почта:</dt><dd><a href="mailto:domdream.yourdesign@yandex.ru">domdream.yourdesign@yandex.ru</a></dd></div>
        </dl>
      </div>
    </section>

    <footer class="footer">
      <a class="logo" href="#"><span class="logo-name">DOMDREAM</span><span class="logo-tag">Мечты –<br>это ваша реальность</span></a>
      <a class="credit" href="#">Сделали в <s>Creative</s>Cult</a>
      <p class="copyright">©DomDream.<br>Все права защищены, 2009 – 2018 г.</p>
    </footer>
  </main>

</div>
</body>
</html>
```
FILE: styles.css
```css
* { box-sizing: border-box; }

body {
  margin: 0;
  background: #eee;
  color: #0c1416;
  font-family: Inter, "Noto Sans", sans-serif;
}

h1, h2, p, ul, dl, dd { margin: 0; padding: 0; }
ul { list-style: none; }
a { color: inherit; text-decoration: none; }

.board {
  display: grid;
  grid-template-columns: minmax(0, 2fr) minmax(0, 9fr);
  column-gap: 62px;
  align-items: start;
  padding: 0 128px 72px 130px;
}

.phone {
  background: #fff;
  padding: 0 32px 96px;
}

.desktop {
  background: #fff;
  padding: 0 240px 189px;
}

/* Buttons */
.btn {
  display: block;
  width: 768px;
  max-width: 100%;
  height: 112px;
  border: 2px solid #de7f42;
  border-radius: 8px;
  background: #e0874c;
  color: #fff;
  font: 600 39px/48px Inter, "Noto Sans", sans-serif;
}
.btn-tail {
  height: 20px;
  border-top: 0;
  border-radius: 0 0 8px 8px;
}

/* Contacts */
.phone-title {
  margin: 116px 0 34px;
  font-size: 41px;
  line-height: 48px;
  font-weight: 600;
}
.location-title {
  margin-bottom: 51px;
  font-size: 48px;
  line-height: 56px;
  font-weight: 600;
}
.contacts {
  display: grid;
  gap: 28px;
}
.contact {
  display: grid;
  gap: 4px;
}
.contact dt {
  color: #75675f;
  font-size: 29px;
  line-height: 40px;
}
.contact dd {
  font-size: 41px;
  line-height: 60px;
  white-space: nowrap;
}
.contacts-small { gap: 32px; }
.contacts-small .contact { gap: 8px; }
.contacts-small dd {
  font-size: 33px;
  line-height: 44px;
}

/* Offer */
.house-price {
  margin-top: -15px;
  text-align: center;
  font-size: 44px;
  line-height: 56px;
  font-weight: 500;
}
.offer {
  width: 66%;
  margin: 67px auto 96px;
  padding: 68px 64px 64px;
  background: #fff0e4;
}
.offer-title {
  font-size: 49px;
  line-height: 56px;
  font-weight: 500;
}
.offer-list {
  margin: 20px 0 32px;
  font-size: 36px;
  line-height: 52px;
}
.offer-price {
  margin-bottom: 48px;
  color: #de7530;
  font-size: 60px;
  line-height: 80px;
}

/* Map with the contact card laid over it */
.location { display: grid; }
.location-map {
  grid-area: 1 / 1;
  width: 100%;
  height: 100%;
}
.location-card {
  grid-area: 1 / 1;
  place-self: start;
  z-index: 1;
  width: 844px;
  margin: 96px;
  padding: 100px 82px 93px;
  background: #fff;
}
.phone-map {
  display: block;
  width: 100%;
  height: auto;
  margin-top: 50px;
}

/* Footers */
.footer {
  display: grid;
  grid-template-columns: 1fr auto 1fr;
  align-items: center;
  margin-top: 62px;
  padding-top: 62px;
  border-top: 3px solid #dedede;
}
.footer .copyright { text-align: right; }
.phone-footer {
  display: flex;
  flex-direction: column;
  align-items: center;
  margin-top: 62px;
  padding-top: 63px;
  border-top: 3px solid #dedede;
  text-align: center;
}
.phone-footer .credit { margin: 80px 0 32px; }
.logo {
  display: flex;
  align-items: center;
}
.logo-name {
  padding-right: 25px;
  font-size: 42px;
  line-height: 64px;
  font-weight: 500;
}
.logo-tag {
  padding-left: 19px;
  border-left: 3px solid #3c4648;
  font-size: 26px;
  line-height: 32px;
  text-align: left;
}
.phone-footer .logo-name { font-size: 40px; }
.phone-footer .logo-tag { font-size: 24px; }
.credit {
  color: #de7530;
  font-size: 29px;
  line-height: 36px;
}
.copyright {
  color: #6b5f59;
  font-size: 28px;
  line-height: 36px;
}

/* Map drawing */
.case, .fill, .highway, .lane, .rail, .river, .water, .pier, .border {
  fill: none;
  stroke-linejoin: round;
}
.case { stroke: #f8d09a; stroke-width: 21px; stroke-linecap: round; }
.fill { stroke: #fdeab2; stroke-width: 15px; stroke-linecap: round; }
.case-s { stroke-width: 13px; }
.fill-s { stroke-width: 7px; }
.case-n { stroke-width: 7px; }
.fill-n { stroke-width: 4px; }
.highway { stroke: #fdc583; stroke-width: 32px; }
.highway .thin { stroke-width: 18px; }
.highway .loop { stroke-width: 9px; }
.highway .mid { stroke-width: 24px; }
.highway .tunnel { stroke: #fce5c6; stroke-width: 22px; }
.highway-n { stroke-width: 10px; }
.highway-n .tunnel { stroke-width: 8px; }
.lane { stroke: #e6e2cf; stroke-width: 4px; }
.rail { stroke: #cfd1d3; stroke-width: 6px; stroke-dasharray: 12px 4px; }
.river { stroke: #a6d3e6; stroke-width: 26px; }
.water { stroke: #b3dbeb; stroke-linejoin: round; }
.pier { stroke: #fefaf3; stroke-width: 14px; }
.pier-thin { stroke-width: 7px; }
.border { stroke: #f2474f; stroke-opacity: .78; stroke-width: 8px; }
.border-n { stroke-width: 4px; }

.label {
  fill: #333;
  stroke: #fff;
  stroke-width: 3px;
  paint-order: stroke;
  font: 500 21px "Open Sans", "Noto Sans", sans-serif;
}
.label-mall { font-size: 20px; }
.label-street { font-size: 20px; }
.label-wide { font-size: 26px; }
.label-river { fill: #2d6a9c; }
.station { fill: #2d86bd; font: 22px "Open Sans", "Noto Sans", sans-serif; }
.city { fill: #111; font: 700 25px "Open Sans", "Noto Sans", sans-serif; }

.badge text {
  fill: #fff;
  text-anchor: middle;
  font: 700 15px "Open Sans", "Noto Sans", sans-serif;
}
.badge-big text { font-size: 18px; }
.badge-blue { fill: #1a6fb8; }
.badge-green { fill: #068765; }

.n-district text, .n-mid { text-anchor: middle; }
.n-district { fill: #8c8c8c; font: 600 19px "Open Sans", "Noto Sans", sans-serif; }
.n-place {
  fill: #333;
  stroke: #fff;
  stroke-width: 2px;
  paint-order: stroke;
  font: 600 18px "Open Sans", "Noto Sans", sans-serif;
}
.n-water { fill: #2d86bd; font: 600 17px "Open Sans", "Noto Sans", sans-serif; }
.stop { fill: #fff; stroke: #2d86bd; stroke-width: 4px; }
```
